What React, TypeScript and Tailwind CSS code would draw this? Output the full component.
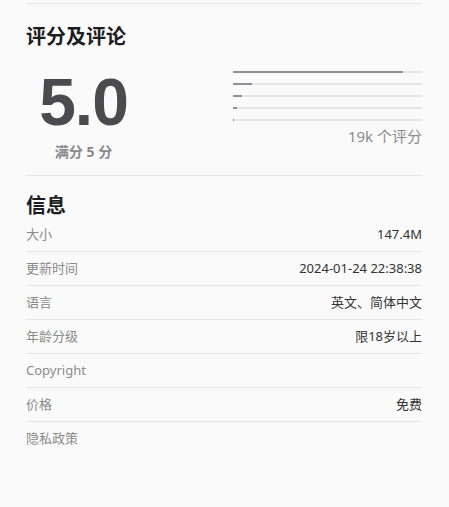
import React from "react";

const bars = [0.9, 0.1, 0.045, 0.02, 0.006];

const rows: { label: string; value?: string }[] = [
    { label: "大小", value: "147.4M" },
    { label: "更新时间", value: "2024-01-24 22:38:38" },
    { label: "语言", value: "英文、简体中文" },
    { label: "年龄分级", value: "限18岁以上" },
    { label: "Copyright" },
    { label: "价格", value: "免费" },
    { label: "隐私政策" },
];

function RatingBars() {
    return (
        <div className="flex flex-col gap-[10px] pt-[1px]">
            {bars.map((b, i) => (
                <div key={i} className="h-[2px] w-full bg-[#e6e6e6]">
                    <div className="h-full bg-[#8e8e93]" style={{ width: `${b * 100}%` }} />
                </div>
            ))}
        </div>
    );
}

export default function App() {
    return (
        <div
            className="min-h-screen bg-[#fafafa] pl-[26px] pr-[27px] pt-[3px] text-[#1d1d1f]"
            style={{ fontFamily: '"Noto Sans", "Noto Sans CJK SC", sans-serif' }}
        >
            <div className="border-t border-[#e5e5e5]" />
            <h2 className="mt-[19px] text-[20px] font-bold leading-[28px]">评分及评论</h2>

            <div className="flex pb-[13px]">
                <div className="flex w-[115px] flex-col items-center">
                    <div
                        className="mt-[19px] text-[66px] font-bold leading-[64px] tracking-[-1px] text-[#4a4a4f]"
                        style={{ fontFamily: '"Liberation Sans", sans-serif' }}
                    >
                        5.0
                    </div>
                    <div className="mt-[8px] text-[14px] font-bold leading-[20px] text-[#8a8a8e]">满分 5 分</div>
                </div>
                <div className="ml-[92px] flex flex-1 flex-col pt-[19px]">
                    <RatingBars />
                    <div className="mt-[5px] text-right text-[15px] leading-[20px] text-[#8a8a8e]">19k 个评分</div>
                </div>
            </div>

            <div className="border-t border-[#e5e5e5]" />
            <h2 className="mt-[18px] text-[20px] font-bold leading-[24px]">信息</h2>

            <div>
                {rows.map((r, i) => (
                    <div
                        key={r.label}
                        className={`flex justify-between py-[8px] text-[13px] leading-[17px] ${i < rows.length - 1 ? "border-b border-[#e5e5e5]" : ""}`}
                    >
                        <span className="text-[#8a8a8a]">{r.label}</span>
                        {r.value && <span className="text-[#333]">{r.value}</span>}
                    </div>
                ))}
            </div>
        </div>
    );
}
